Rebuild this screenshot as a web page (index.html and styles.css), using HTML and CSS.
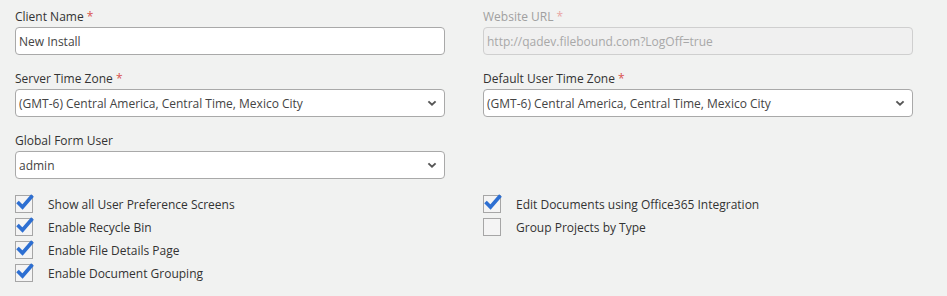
FILE: index.html
```html
<!DOCTYPE html>
<html lang="en">
<head>
    <meta charset="UTF-8">
    <meta name="viewport" content="width=device-width, initial-scale=1.0">
    <title>Client Settings</title>
    <link rel="stylesheet" href="styles.css">
</head>
<body>
    <div class="container">
        <div class="form-grid">
            <div class="field">
                <label class="field-label">Client Name <span class="req">*</span></label>
                <input type="text" class="text-input" value="New Install">
            </div>
            <div class="field disabled">
                <label class="field-label">Website URL <span class="req">*</span></label>
                <input type="text" class="text-input" value="http://qadev.filebound.com?LogOff=true" disabled>
            </div>

            <div class="field">
                <label class="field-label">Server Time Zone <span class="req">*</span></label>
                <div class="select-wrap">
                    <select class="select-input">
                        <option>(GMT-6) Central America, Central Time, Mexico City</option>
                    </select>
                    <svg class="chevron" width="10" height="7" viewBox="0 0 10 7"><path d="M1.4 1.4 L5 4.8 L8.6 1.4" fill="none" stroke="#555" stroke-width="1.9"/></svg>
                </div>
            </div>
            <div class="field">
                <label class="field-label">Default User Time Zone <span class="req">*</span></label>
                <div class="select-wrap">
                    <select class="select-input">
                        <option>(GMT-6) Central America, Central Time, Mexico City</option>
                    </select>
                    <svg class="chevron" width="10" height="7" viewBox="0 0 10 7"><path d="M1.4 1.4 L5 4.8 L8.6 1.4" fill="none" stroke="#555" stroke-width="1.9"/></svg>
                </div>
            </div>

            <div class="field">
                <label class="field-label">Global Form User</label>
                <div class="select-wrap">
                    <select class="select-input">
                        <option>admin</option>
                    </select>
                    <svg class="chevron" width="10" height="7" viewBox="0 0 10 7"><path d="M1.4 1.4 L5 4.8 L8.6 1.4" fill="none" stroke="#555" stroke-width="1.9"/></svg>
                </div>
            </div>
            <div></div>
        </div>

        <div class="check-grid">
            <div class="check-col">
                <div class="check-row"><span class="box checked"><svg class="tick" width="20" height="20" viewBox="0 0 20 20"><path d="M2.5 10 L7.5 15 L17.5 3.5" fill="none" stroke="#2d6fd2" stroke-width="3.6"/></svg></span>Show all User Preference Screens</div>
                <div class="check-row"><span class="box checked"><svg class="tick" width="20" height="20" viewBox="0 0 20 20"><path d="M2.5 10 L7.5 15 L17.5 3.5" fill="none" stroke="#2d6fd2" stroke-width="3.6"/></svg></span>Enable Recycle Bin</div>
                <div class="check-row"><span class="box checked"><svg class="tick" width="20" height="20" viewBox="0 0 20 20"><path d="M2.5 10 L7.5 15 L17.5 3.5" fill="none" stroke="#2d6fd2" stroke-width="3.6"/></svg></span>Enable File Details Page</div>
                <div class="check-row"><span class="box checked"><svg class="tick" width="20" height="20" viewBox="0 0 20 20"><path d="M2.5 10 L7.5 15 L17.5 3.5" fill="none" stroke="#2d6fd2" stroke-width="3.6"/></svg></span>Enable Document Grouping</div>
            </div>
            <div class="check-col">
                <div class="check-row"><span class="box checked"><svg class="tick" width="20" height="20" viewBox="0 0 20 20"><path d="M2.5 10 L7.5 15 L17.5 3.5" fill="none" stroke="#2d6fd2" stroke-width="3.6"/></svg></span>Edit Documents using Office365 Integration</div>
                <div class="check-row"><span class="box"></span>Group Projects by Type</div>
            </div>
        </div>
    </div>
</body>
</html>
```

FILE: styles.css
```css
body {
    font-family: "Open Sans", Arial, sans-serif;
    font-size: 12px;
    color: #333;
    margin: 0;
    background-color: #f1f2f1;
}
.container {
    width: 898px;
    padding: 8px 15px 0 15px;
}
.form-grid {
    display: grid;
    grid-template-columns: 430px 430px;
    column-gap: 38px;
    row-gap: 15px;
}
.field-label {
    display: block;
    line-height: 17px;
    margin-bottom: 2px;
    color: #333;
}
.req {
    color: #d9534f;
}
.text-input,
.select-input {
    box-sizing: border-box;
    width: 100%;
    height: 28px;
    margin: 0;
    padding: 0 3px;
    font-family: "Open Sans", Arial, sans-serif;
    font-size: 12px;
    color: #444;
    background-color: #fff;
    border: 1px solid #a9a9a9;
    border-radius: 4px;
    outline: none;
}
.select-input {
    appearance: none;
    -webkit-appearance: none;
    padding-left: 3px;
}
.disabled .field-label {
    color: #a0a0a0;
}
.disabled .req {
    color: #e9a5a3;
}
.disabled .text-input {
    background-color: #f0f0f0;
    border-color: #cfcfcf;
    color: #a8a8a8;
}
.select-wrap {
    position: relative;
}
.chevron {
    position: absolute;
    right: 8px;
    top: 11px;
    pointer-events: none;
}
.check-grid {
    display: grid;
    grid-template-columns: 430px 430px;
    column-gap: 38px;
    margin-top: 16px;
}
.check-row {
    display: flex;
    align-items: center;
    height: 18px;
    margin-bottom: 5px;
    color: #333;
}
.box {
    position: relative;
    box-sizing: border-box;
    width: 18px;
    height: 18px;
    margin-right: 15px;
    border: 1px solid #a6a6a6;
    background-color: #f4f4f4;
}
.tick {
    position: absolute;
    left: -1px;
    top: -4px;
}
```
